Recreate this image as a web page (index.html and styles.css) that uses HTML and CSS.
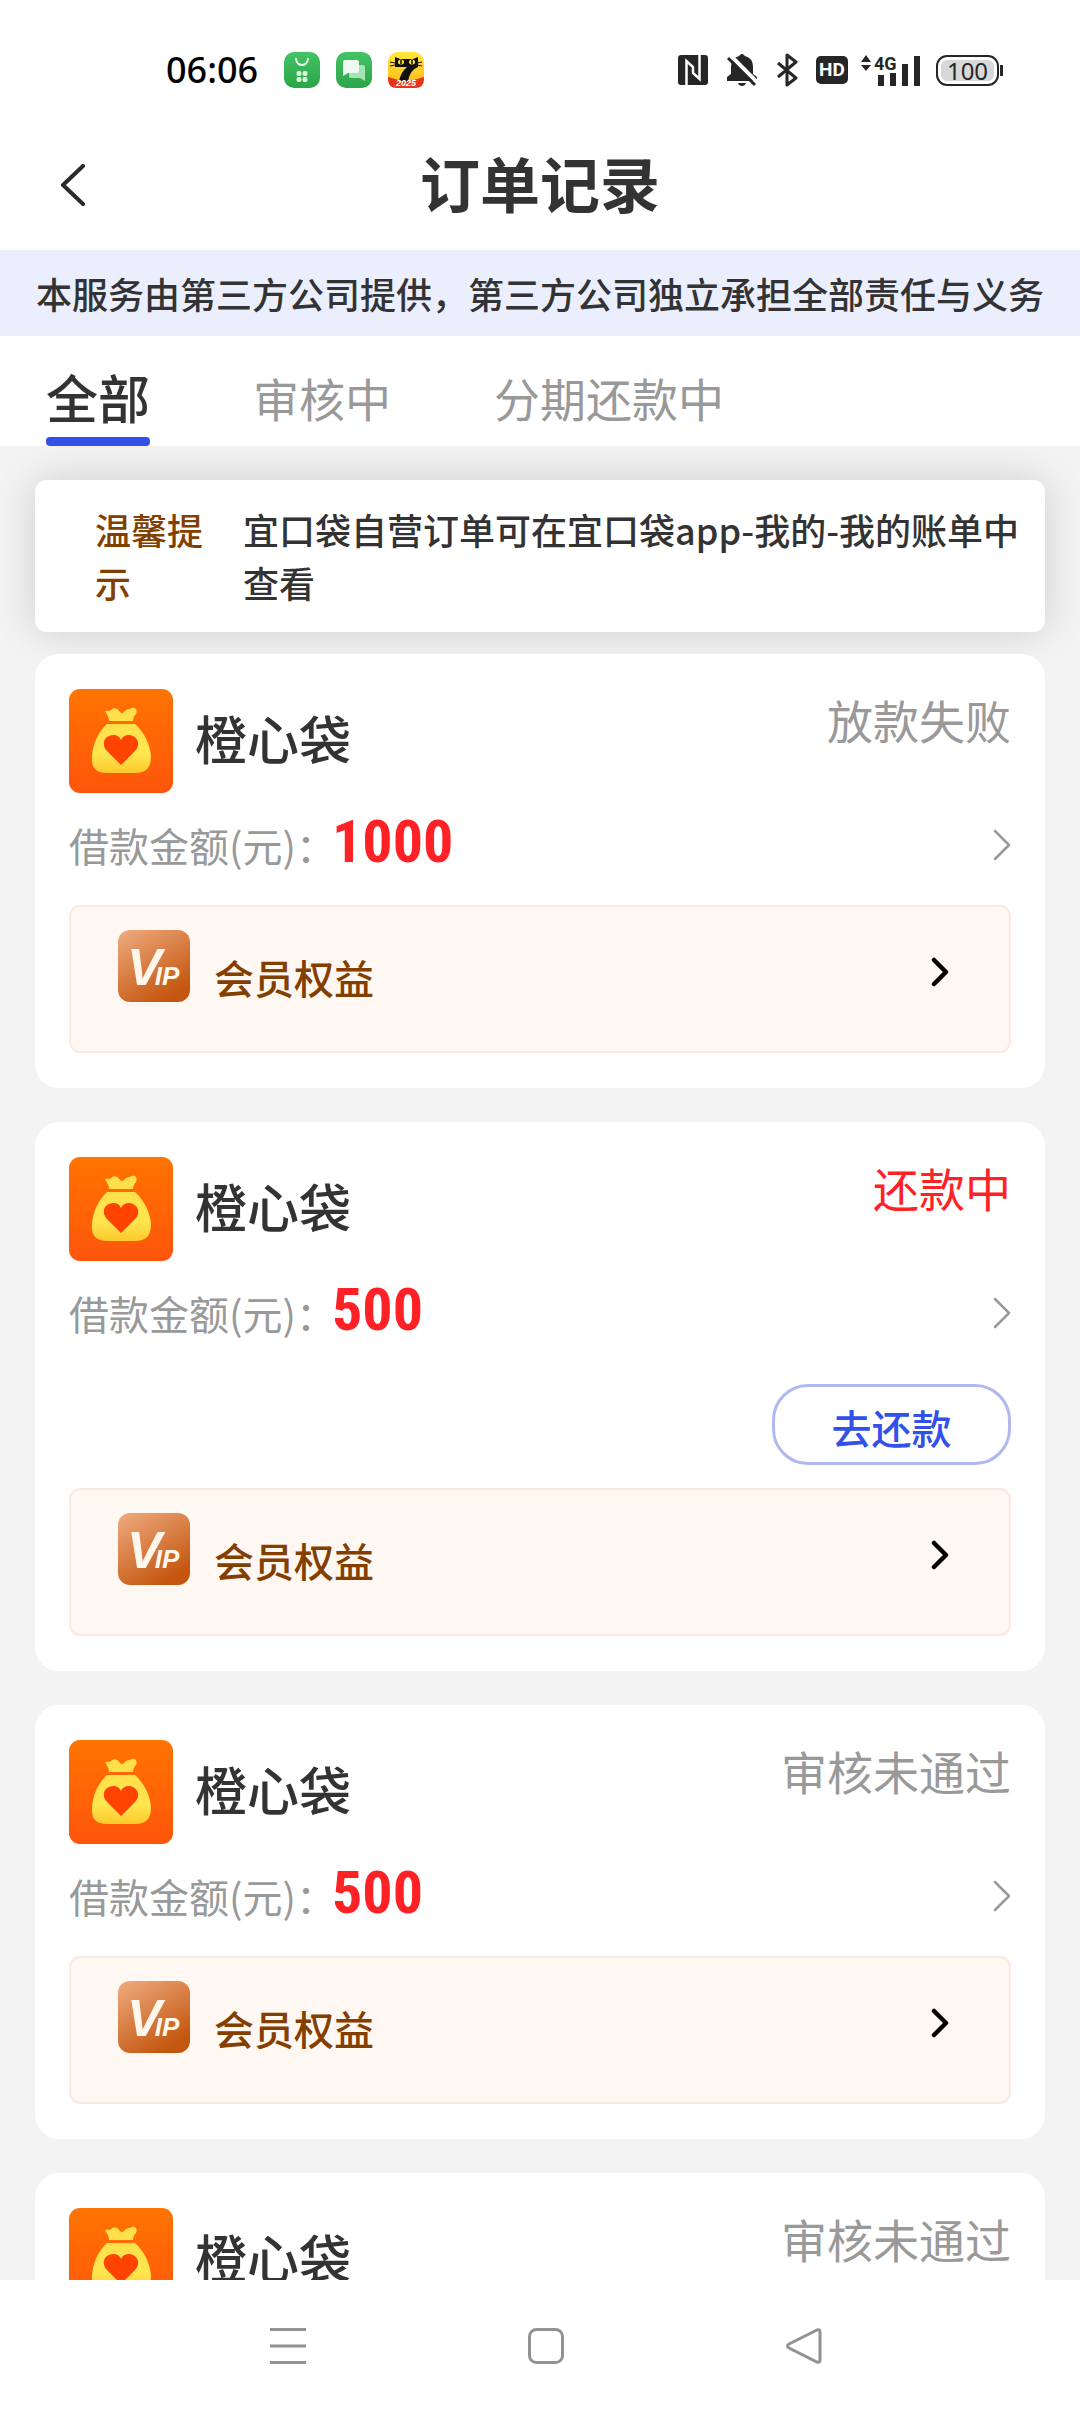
FILE: index.html
```html
<!DOCTYPE html>
<html lang="zh-CN">
<head>
<meta charset="utf-8">
<meta name="viewport" content="width=device-width, initial-scale=1">
<title>订单记录</title>
<link rel="stylesheet" href="styles.css">
</head>
<body>
<svg class="sprite" aria-hidden="true">
  <defs>
    <linearGradient id="g-orange" x1="0" y1="0" x2="0" y2="1"><stop offset="0" stop-color="#ff7401"/><stop offset="1" stop-color="#ff550c"/></linearGradient>
    <linearGradient id="g-gold" x1="0" y1="0" x2="0" y2="1"><stop offset="0" stop-color="#ffe04a"/><stop offset=".6" stop-color="#ffe64f"/><stop offset="1" stop-color="#fcc92c"/></linearGradient>
    <linearGradient id="g-vip" x1="0" y1="0" x2=".6" y2="1"><stop offset="0" stop-color="#efac80"/><stop offset="1" stop-color="#c4560f"/></linearGradient>
    <linearGradient id="g-green" x1="0" y1="0" x2="0" y2="1"><stop offset="0" stop-color="#43c465"/><stop offset="1" stop-color="#2aa548"/></linearGradient>
    <linearGradient id="g-sun" x1="0" y1="0" x2="0" y2="1"><stop offset="0" stop-color="#ffe838"/><stop offset="1" stop-color="#ffb71b"/></linearGradient>
  </defs>
  <symbol id="bag" viewBox="0 0 104 104">
    <rect width="104" height="104" rx="11" fill="url(#g-orange)"/>
    <path d="M40 32C40 28 38 26 36 22C39 21 41 23 43 20C46 18 49 20 51 23Q53 25 55 23C57 20 61 20 63 19C66 18 69 21 67 25C65 27 64 29 64 32Z" fill="#ffe04a"/>
    <path d="M38 35H66C74 42 81 54 82 67C82 79 77 84 66 84H38C27 84 22 79 23 67C24 54 30 42 38 35Z" fill="url(#g-gold)"/>
    <path d="M52 76L38 62C33 57 34 49 40 47C45 45 50 46 52 51C54 46 60 45 64 47C70 50 71 57 66 62Z" fill="#ff4300"/>
  </symbol>
  <symbol id="next" viewBox="0 0 18 32"><path d="M2 2L16 16L2 30" fill="none" stroke="currentColor" stroke-width="2.5" stroke-linecap="round" stroke-linejoin="round"/></symbol>
  <symbol id="next-bold" viewBox="0 0 18 30"><path d="M3 3L15 15L3 27" fill="none" stroke="currentColor" stroke-width="4.5" stroke-linecap="round" stroke-linejoin="round"/></symbol>
</svg>

<div class="status-bar">
  <div class="status-left">
    <span class="clock">06:06</span>
    <svg class="app-icon" viewBox="0 0 36 36"><rect width="36" height="36" rx="10" fill="url(#g-green)"/><path d="M12 7Q13 13 18 13T24 7" fill="none" stroke="#eafbea" stroke-width="2" stroke-linecap="round"/><g fill="#dcf6dd"><rect x="12.500" y="19" width="5" height="5" rx="2"/><rect x="18.500" y="19" width="5" height="5" rx="2"/><rect x="12.500" y="25" width="5" height="5" rx="2"/><rect x="18.500" y="25" width="5" height="5" rx="2"/></g></svg>
    <svg class="app-icon" viewBox="0 0 36 36"><rect width="36" height="36" rx="10" fill="url(#g-green)"/><path d="M13 13H27Q29 13 29 15V29L24 26H15Q13 26 13 24Z" fill="#a5e4b3"/><path d="M9 8H21Q23 8 23 10V19Q23 21 21 21H12L7 24V10Q7 8 9 8Z" fill="#eefbf0"/></svg>
    <svg class="app-icon" viewBox="0 0 36 36"><rect width="36" height="36" rx="10" fill="url(#g-sun)"/><path d="M0 25Q18 32 36 25V27Q36 36 27 36H9Q0 36 0 27Z" fill="#e8341c"/><path d="M7 5L12 7H25L30 5V15Q22 18 20 29H11Q13 20 19 15H7Z" fill="#111"/><path d="M2 10L7 11M2 14L7 13M34 10L29 11M34 14L29 13" stroke="#111" stroke-width="1"/><ellipse cx="13" cy="10" rx="3" ry="2.5" fill="#ffe23a"/><ellipse cx="24" cy="10" rx="3" ry="2.5" fill="#ffe23a"/><path d="M13 8V12M24 8V12" stroke="#111" stroke-width="1.5"/><text x="8" y="34" class="year">2025</text></svg>
  </div>
  <div class="status-right">
    <svg class="nfc" viewBox="0 0 30 30"><rect width="30" height="30" rx="3" fill="#262626"/><path d="M8.500 30V6L15 12V18M21.500 0V24L15 18V12" fill="none" stroke="#fff" stroke-width="2.500"/></svg>
    <svg class="bell" viewBox="0 0 32 34"><path d="M1 28V24L5 21V14Q5 5 13 3Q16 -1 19 3Q27 5 27 14V21L31 24V28ZM12 30H20Q19 33 16 33T12 30Z" fill="#262626"/><path d="M3 1L32 30" stroke="#fff" stroke-width="4"/><path d="M2 5L29 32" stroke="#262626" stroke-width="3"/></svg>
    <svg class="bt" viewBox="0 0 22 34"><path d="M2 10L20 25L11 32V2L20 9L2 24" fill="none" stroke="#262626" stroke-width="3" stroke-linejoin="round"/></svg>
    <span class="hd">HD</span>
    <svg class="signal" viewBox="0 0 62 34"><path d="M1 9L6 2L11 9ZM1 12L6 18L11 12Z" fill="#262626"/><text x="14" y="17" class="gen">4G</text><path d="M18 22H24V33H18ZM30 20H36V33H30ZM42 11H48V33H42ZM54 3H60V33H54Z" fill="#262626"/></svg>
    <span class="battery">100</span>
  </div>
</div>

<header class="title-bar">
  <button class="back" type="button" aria-label="返回"><svg viewBox="0 0 26 42"><path d="M23 2L3 21L23 40" fill="none" stroke="#2a2a2a" stroke-width="4" stroke-linecap="round" stroke-linejoin="round"/></svg></button>
  <h1>订单记录</h1>
</header>

<p class="banner">本服务由第三方公司提供，第三方公司独立承担全部责任与义务</p>

<nav class="tabs">
  <button class="tab active" type="button">全部</button>
  <button class="tab" type="button">审核中</button>
  <button class="tab" type="button">分期还款中</button>
</nav>

<main class="orders">
  <section class="notice">
    <strong>温馨提示</strong>
    <p>宜口袋自营订单可在宜口袋app-我的-我的账单中查看</p>
  </section>

  <article class="card">
    <div class="card-head"><svg class="logo"><use href="#bag"/></svg><h2>橙心袋</h2><span class="state">放款失败</span></div>
    <a class="amount" href="#order-1"><span>借款金额(元)：</span><b>1000</b><svg class="next"><use href="#next"/></svg></a>
    <a class="member" href="#member-1"><svg class="vip" viewBox="0 0 72 72"><rect width="72" height="72" rx="12" fill="url(#g-vip)"/><text x="9" y="55" class="vip-letters">V<tspan class="vip-small" dx="-7">IP</tspan></text></svg><span>会员权益</span><svg class="go"><use href="#next-bold"/></svg></a>
  </article>

  <article class="card">
    <div class="card-head"><svg class="logo"><use href="#bag"/></svg><h2>橙心袋</h2><span class="state due">还款中</span></div>
    <a class="amount" href="#order-2"><span>借款金额(元)：</span><b>500</b><svg class="next"><use href="#next"/></svg></a>
    <button class="repay" type="button">去还款</button>
    <a class="member" href="#member-2"><svg class="vip" viewBox="0 0 72 72"><rect width="72" height="72" rx="12" fill="url(#g-vip)"/><text x="9" y="55" class="vip-letters">V<tspan class="vip-small" dx="-7">IP</tspan></text></svg><span>会员权益</span><svg class="go"><use href="#next-bold"/></svg></a>
  </article>

  <article class="card">
    <div class="card-head"><svg class="logo"><use href="#bag"/></svg><h2>橙心袋</h2><span class="state">审核未通过</span></div>
    <a class="amount" href="#order-3"><span>借款金额(元)：</span><b>500</b><svg class="next"><use href="#next"/></svg></a>
    <a class="member" href="#member-3"><svg class="vip" viewBox="0 0 72 72"><rect width="72" height="72" rx="12" fill="url(#g-vip)"/><text x="9" y="55" class="vip-letters">V<tspan class="vip-small" dx="-7">IP</tspan></text></svg><span>会员权益</span><svg class="go"><use href="#next-bold"/></svg></a>
  </article>

  <article class="card">
    <div class="card-head"><svg class="logo"><use href="#bag"/></svg><h2>橙心袋</h2><span class="state">审核未通过</span></div>
  </article>
</main>

<footer class="system-nav">
  <button type="button" aria-label="最近任务"><svg viewBox="0 0 36 36"><path d="M0 1.500H36M0 18H36M0 34.500H36"/></svg></button>
  <button type="button" aria-label="主屏幕"><svg viewBox="0 0 36 36"><rect x="1.500" y="1.500" width="33" height="33" rx="7"/></svg></button>
  <button type="button" aria-label="返回上一级"><svg viewBox="0 0 36 36"><path d="M31 2L3 16Q0 18 3 20L31 34Q34 35 34 32V4Q34 1 31 2Z"/></svg></button>
</footer>
</body>
</html>
```
FILE: styles.css
```css
* { box-sizing: border-box; }

body {
  margin: 0;
  height: 100vh;
  display: flex;
  flex-direction: column;
  overflow: hidden;
  background: #fff;
  color: #333;
  font-family: "Noto Sans CJK SC", sans-serif;
}

h1, h2, p { margin: 0; }
a { color: inherit; text-decoration: none; }
svg { display: block; flex: none; }
button {
  margin: 0;
  padding: 0;
  border: 0;
  background: none;
  color: inherit;
  font-family: inherit;
}
.sprite { position: absolute; width: 0; height: 0; }

/* Status bar */
.status-bar {
  flex: none;
  height: 140px;
  padding: 0 81px 0 166px;
  display: flex;
  justify-content: space-between;
  align-items: center;
}
.status-left, .status-right { display: flex; align-items: center; }
.status-left { gap: 16px; }
.clock {
  margin-right: 10px;
  color: #000;
  font: 500 36px/40px "Noto Sans", sans-serif;
}
.app-icon { width: 36px; height: 36px; }
.year { font: italic bold 9px "Liberation Sans", sans-serif; fill: #fff; }
.status-right { gap: 18px; }
.nfc { width: 30px; height: 30px; }
.bell { width: 32px; height: 34px; }
.bt { width: 22px; height: 34px; }
.hd {
  width: 32px;
  border-radius: 5px;
  background: #262626;
  color: #fff;
  text-align: center;
  font: bold 19px/28px Roboto, sans-serif;
}
.signal { width: 62px; height: 34px; margin-left: -6px; overflow: visible; }
.gen { font: bold 18px Roboto, sans-serif; fill: #262626; }
.battery {
  position: relative;
  width: 63px;
  margin-left: -4px;
  border: 2px solid #262626;
  border-radius: 11px;
  box-shadow: inset 0 0 0 3px #fff;
  background: #d8d8d8;
  color: #262626;
  text-align: center;
  font: 24px/27px "Noto Sans", sans-serif;
}
.battery::after {
  content: "";
  position: absolute;
  top: 8px;
  right: -6px;
  width: 3px;
  height: 11px;
  background: #262626;
}

/* Title bar */
.title-bar {
  flex: none;
  height: 110px;
  padding: 0 60px;
  display: grid;
  grid-template-columns: 1fr auto 1fr;
  align-items: start;
}
.back { width: 26px; padding-top: 24px; }
.back svg { width: 26px; height: 42px; }
.title-bar h1 { font-size: 60px; line-height: 84px; font-weight: 700; }

.banner {
  flex: none;
  padding: 0 36px;
  background: #ebeefd;
  font-size: 36px;
  line-height: 86px;
  font-weight: 500;
  white-space: nowrap;
}

/* Tabs */
.tabs {
  flex: none;
  height: 110px;
  padding: 0 46px;
  display: flex;
  align-items: stretch;
  gap: 103px;
}
.tab {
  padding-top: 20px;
  border-bottom: 9px solid transparent;
  color: #999;
  font-size: 46px;
  line-height: 80px;
}
.tab.active {
  position: relative;
  color: #333;
  font-size: 52px;
  font-weight: 500;
}
.tab.active::after {
  content: "";
  position: absolute;
  right: 0;
  bottom: -9px;
  left: 0;
  height: 9px;
  border-radius: 4px;
  background: #3350e8;
}

/* Order list */
.orders {
  flex: 1;
  min-height: 0;
  padding: 34px 35px;
  overflow-y: auto;
  scrollbar-width: none;
  background: #f3f3f3;
}
.notice {
  padding: 23px 20px 23px 60px;
  display: flex;
  gap: 20px;
  border-radius: 12px;
  background: #fff;
  box-shadow: 0 0 40px rgba(0, 0, 0, .15);
  font-size: 36px;
  line-height: 53px;
  font-weight: 500;
}
.notice strong { flex: none; width: 128px; color: #833f00; font-weight: 500; }

.card {
  position: relative;
  margin-bottom: 34px;
  padding: 35px 34px;
  border-radius: 24px;
  background: #fff;
}
.notice + .card { margin-top: 22px; }
.card-head { display: flex; align-items: center; }
.logo { width: 104px; height: 104px; }
.card h2 {
  margin-left: 22px;
  padding-bottom: 6px;
  font-size: 52px;
  line-height: 76px;
  font-weight: 500;
}
.state {
  align-self: flex-start;
  margin-left: auto;
  color: #999;
  font-size: 46px;
  line-height: 60px;
}
.state.due { color: #fe2226; }

.amount {
  height: 112px;
  padding-bottom: 8px;
  display: flex;
  align-items: center;
  color: #999;
  font-size: 40px;
  line-height: 60px;
}
.amount b {
  margin-left: -4px;
  padding-bottom: 6px;
  color: #fe2226;
  font: bold 60px/76px "Liberation Sans Narrow", "Roboto Condensed", Roboto, sans-serif;
}
.next { width: 18px; height: 32px; margin-left: auto; }

.repay {
  display: block;
  width: 239px;
  margin: 11px 0 23px auto;
  padding-top: 5px;
  border: 3px solid #b0b9ef;
  border-radius: 36px;
  color: #3350e8;
  font-size: 40px;
  line-height: 70px;
  font-weight: 500;
}

.member {
  padding: 23px 60px 49px 47px;
  display: flex;
  align-items: center;
  border: 2px solid #faeae2;
  border-radius: 11px;
  background: #fff7f1;
  color: #833f00;
  font-size: 40px;
  line-height: 50px;
  font-weight: 500;
}
.vip { width: 72px; height: 72px; }
.vip-letters { font: italic bold 52px "Liberation Sans", sans-serif; fill: #fff7ec; }
.vip-small { font-size: 26px; }
.member span { margin-left: 24px; padding-top: 22px; }
.go { width: 18px; height: 30px; margin: 12px 0 0 auto; color: #000; }

/* System navigation */
.system-nav {
  flex: none;
  height: 132px;
  padding: 0 246px 0 258px;
  display: flex;
  justify-content: space-between;
  align-items: center;
  background: #fff;
}
.system-nav button { padding: 12px; }
.system-nav svg { width: 36px; height: 36px; fill: none; stroke: #929292; stroke-width: 3; }
```
